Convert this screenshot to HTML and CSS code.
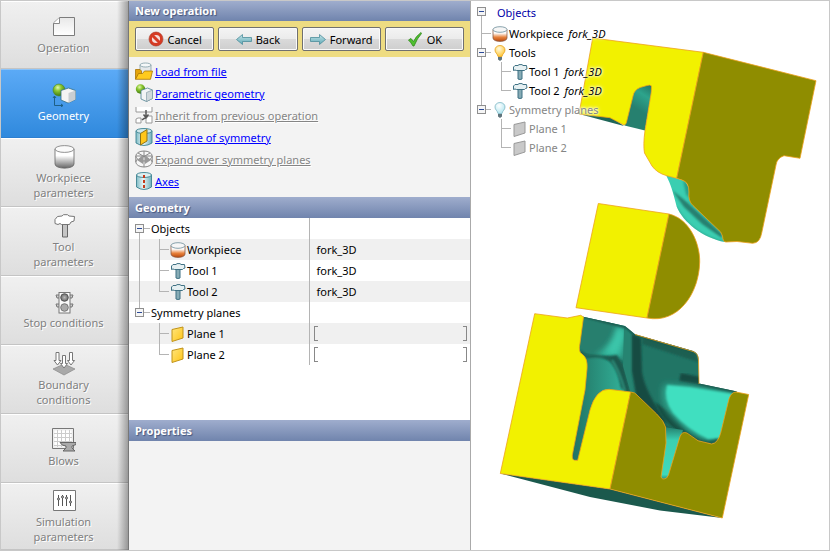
FILE: index.html
```html
<!DOCTYPE html>
<html lang="en">
<head>
<meta charset="utf-8">
<title>New operation</title>
<link rel="stylesheet" href="styles.css">
</head>
<body>
<svg class="defs" aria-hidden="true">
  <defs>
    <linearGradient id="gGray" x1="0" y1="0" x2="0" y2="1"><stop offset=".35" stop-color="#fff"/><stop offset="1" stop-color="#666"/></linearGradient>
    <linearGradient id="gPaper" x1="0" y1="0" x2="0" y2="1"><stop offset="0" stop-color="#e8e8e8"/><stop offset="1" stop-color="#fff"/></linearGradient>
    <linearGradient id="gHot" x1="0" y1="0" x2="0" y2="1"><stop offset=".3" stop-color="#fff"/><stop offset=".65" stop-color="#e8823c"/><stop offset="1" stop-color="#b8480c"/></linearGradient>
    <linearGradient id="gGlass" x1="0" y1="0" x2="1" y2="0"><stop offset="0" stop-color="#7fbcc6"/><stop offset=".45" stop-color="#e9f5f6"/><stop offset="1" stop-color="#6fb0bc"/></linearGradient>
    <linearGradient id="gPlane" x1="0" y1="0" x2="1" y2="1"><stop offset="0" stop-color="#ffe680"/><stop offset="1" stop-color="#ffc414"/></linearGradient>
    <linearGradient id="gArrow" x1="0" y1="0" x2="0" y2="1"><stop offset="0" stop-color="#c4e4e8"/><stop offset="1" stop-color="#5fa9b6"/></linearGradient>
    <radialGradient id="gBall" cx=".4" cy=".3" r=".7"><stop offset="0" stop-color="#e4f7b4"/><stop offset=".4" stop-color="#8cc832"/><stop offset="1" stop-color="#3f7a10"/></radialGradient>
    <radialGradient id="gBulb" cx=".4" cy=".3" r=".7"><stop offset="0" stop-color="#fffbe0"/><stop offset="1" stop-color="#ffc636"/></radialGradient>
    <radialGradient id="gBulbOff" cx=".4" cy=".3" r=".7"><stop offset="0" stop-color="#fff"/><stop offset="1" stop-color="#b4e6f0"/></radialGradient>
    <radialGradient id="gLamp"><stop offset="0" stop-color="#bbb"/><stop offset="1" stop-color="#666"/></radialGradient>
  </defs>
  <symbol id="i-hammer" viewBox="0 0 16 16">
    <path d="M6 5.500h4V15q-2 1-4 0z" fill="#86abb5" stroke="#3f7183"/>
    <path d="M1.500 3 3 1.500 6 1.500 7 .600h3l1 .900h3.500l.500 3.500-1.500.500-1 1H4.500L3 6 1.500 6.500z" fill="#e6f0f2" stroke="#3f7183"/>
  </symbol>
  <symbol id="i-workpiece" viewBox="0 0 16 16">
    <path d="M1 3.500V12c0 4.500 14 4.500 14 0V3.500z" fill="url(#gHot)" stroke="#8b5a44" stroke-width=".8"/>
    <ellipse cx="8" cy="3.500" rx="7" ry="2.800" fill="#f6f6f6" stroke="#6b8c98" stroke-width=".8"/>
  </symbol>
  <symbol id="i-plane" viewBox="0 0 16 16"><path d="M2 3.500 13 1v11L2 15.500z" fill="url(#gPlane)" stroke="#c09218"/></symbol>
  <symbol id="i-plane-off" viewBox="0 0 16 16"><path d="M2 3.500 13 1v11L2 15.500z" fill="#c9c9c9" stroke="#999"/></symbol>
  <symbol id="i-bulb" viewBox="0 0 12 16">
    <path d="M6 .500C2.800.500 1 2.700 1 5c0 3 2.500 3.500 3 6.500h4C8.500 8.500 11 8 11 5 11 2.700 9.200.500 6 .500z" fill="url(#gBulb)" stroke="#e8a21c" stroke-width=".8"/><path d="M4 12h4v2.500L6 16l-2-1.500z" fill="#60747c"/></symbol>
  <symbol id="i-bulb-off" viewBox="0 0 12 16">
    <path d="M6 .500C2.800.500 1 2.700 1 5c0 3 2.500 3.500 3 6.500h4C8.500 8.500 11 8 11 5 11 2.700 9.200.500 6 .500z" fill="url(#gBulbOff)" stroke="#7fb8c4" stroke-width=".8"/><path d="M4 12h4v2.500L6 16l-2-1.500z" fill="#60747c"/></symbol>
  <symbol id="i-box" viewBox="0 0 9 9"><rect x=".5" y=".5" width="8" height="8" fill="#f5f5f5" stroke="#8f8f8f"/><path d="M2 4.500h5" stroke="#2b4a98"/></symbol>
</svg>

<div class="app">
  <nav class="steps" aria-label="Steps">
    <button class="step">
      <svg viewBox="0 0 24 24"><path d="M1.500 8 7.500 2.500h15v18h-21z" fill="url(#gPaper)" stroke="#7c7c7c"/><path d="M1.500 8.500h6v-6" fill="#fff" stroke="#888"/></svg>
      <span>Operation</span></button>
    <button class="step current" aria-current="step">
      <svg viewBox="0 0 24 24"><circle cx="7" cy="7" r="6" fill="url(#gBall)" stroke="#4e8620" stroke-width=".6"/><path d="M9 7.500 16.500 5l7 2.500v9L16 20l-7-3z" fill="#f4f4f4" stroke="#327087" stroke-width=".8"/><path d="m16.500 10 7-2.500v9L16.500 20z" fill="#c9ced2"/><path d="M2.500 13v9.500H11M1 15l1.500-2L4 15M9 21l2 1.500L9 24" fill="none" stroke="#1e5f85"/></svg>
      <span>Geometry</span></button>
    <button class="step">
      <svg viewBox="0 0 24 24"><path d="M3 4v15c0 5.500 19 5.500 19 0V4z" fill="url(#gGray)" stroke="#666" stroke-width=".8"/><ellipse cx="12.500" cy="4" rx="9.500" ry="3.400" fill="#fafafa" stroke="#777" stroke-width=".8"/></svg>
      <span>Workpiece<br>parameters</span></button>
    <button class="step">
      <svg viewBox="0 0 24 24"><path d="M10.500 9h5v14h-5z" fill="#c5c5c5" stroke="#666"/><path d="M3 5.500 5.500 2.500 10 2l1.500-1.300h4L17 2l5.500.500-.500 4.500-3 1-1.500 2.500h-8L8 9.500 6 10.500 3 9.500z" fill="#fff" stroke="#777"/></svg>
      <span>Tool<br>parameters</span></button>
    <button class="step">
      <svg viewBox="0 0 24 24"><path d="M7 5H4l1 3h2m0 6H4l1 3h2M18 5h3l-1 3h-2m0 6h3l-1 3h-2" fill="#ccc" stroke="#777"/><rect x="7" y="2.500" width="11" height="20.500" fill="#fafafa" stroke="#777"/><circle cx="12.500" cy="7.500" r="3.800" fill="url(#gLamp)" stroke="#555"/><circle cx="12.500" cy="17.500" r="3.800" fill="#aaa" stroke="#777"/></svg>
      <span>Stop conditions</span></button>
    <button class="step">
      <svg viewBox="0 0 24 24"><path d="m1 17 11-5 11 5-11 6z" fill="#a9a9a9" stroke="#888" stroke-width=".7"/><path d="M4 .500h3v8h2L5.500 13 2 8.500h2zM10.500 3.500h3v8h2L12 16l-3.500-4.500h2zM17.500.500h3v8h2L19 13l-3.500-4.500h2z" fill="#fff" stroke="#777"/></svg>
      <span>Boundary<br>conditions</span></button>
    <button class="step">
      <svg viewBox="0 0 24 24"><path d="M.500.500h21v20H.500z" fill="#eee" stroke="#777"/><path d="M2.500 2.500h17v16h-17z" fill="#fff"/><path d="M5.500 2v17M9.500 2v17M13.500 2v17M17.500 2v17M2 5.500h18M2 9.500h18M2 13.500h18M2 17.500h18" stroke="#ccc"/><path d="M8 14.500h16v2l-4 1.500v2l3 3H11l3-3v-2q-4 0-6-3.500z" fill="#aaa" stroke="#666"/></svg>
      <span>Blows</span></button>
    <button class="step">
      <svg viewBox="0 0 24 24"><path d="M1.500 1.500h22v20h-22z" fill="#fff" stroke="#777"/><path d="M6.500 6v11M10.500 6v11M14.500 6v11M18.500 6v11" stroke="#555"/><g fill="#fff" stroke="#444"><circle cx="6.500" cy="10" r="1"/><circle cx="10.500" cy="8" r="1"/><circle cx="14.500" cy="9" r="1"/><circle cx="18.500" cy="13" r="1"/></g></svg>
      <span>Simulation<br>parameters</span></button>
  </nav>

  <main class="panel">
    <h2 class="bar">New operation</h2>
    <div class="actions">
      <button class="btn"><svg viewBox="0 0 16 16"><circle cx="8" cy="8" r="5.500" fill="#f4dedb" stroke="#d63b24" stroke-width="2.800"/><path d="m4 4 8 8" stroke="#d63b24" stroke-width="3"/><circle cx="8" cy="8" r="7" fill="none" stroke="#a5311f" stroke-width=".6"/></svg>Cancel</button>
      <button class="btn"><svg viewBox="0 0 16 16"><path d="m.500 8.500 6-5v3h9v4h-9v3z" fill="url(#gArrow)" stroke="#4b8d9b" stroke-width=".8"/></svg>Back</button>
      <button class="btn"><svg viewBox="0 0 16 16"><path d="m15.500 8.500-6-5v3h-9v4h9v3z" fill="url(#gArrow)" stroke="#4b8d9b" stroke-width=".8"/></svg>Forward</button>
      <button class="btn"><svg viewBox="0 0 16 16"><path d="m1.500 9 2.500-1.500 2.500 3Q9 5 14 1.500l.500 1Q10 7.500 7 15H6Q4 11.500 1.500 9z" fill="#4fc130" stroke="#31871b" stroke-width=".8"/></svg>OK</button>
    </div>
    <ul class="links">
      <li><svg viewBox="0 0 18 18"><path d="M5 3v9h11V3z" fill="#e4e8ea" stroke="#7d979f" stroke-width=".7"/><ellipse cx="10.500" cy="3" rx="5.500" ry="2" fill="#f5f8f9" stroke="#6f8f99" stroke-width=".7"/><path d="M.500 17V7.500H5L6.500 9v3z" fill="#e5a40c" stroke="#a87508" stroke-width=".8"/><path d="M.500 17.300 3.500 11.500h4L9.500 9h8l-2 8.300z" fill="#ffca1e" stroke="#a87508" stroke-width=".8"/></svg><a href="#load">Load from file</a></li>
      <li><svg viewBox="0 0 18 18"><circle cx="5.500" cy="5" r="4.700" fill="url(#gBall)"/><path d="M6 6.500 12.500 4l5 2v8.500L11.500 17.500 6 15z" fill="#f2f5f6" stroke="#4d8291" stroke-width=".8"/><path d="m11.500 8.500 6-2.500v8.500l-6 3z" fill="#cfd8db" stroke="#7896a0" stroke-width=".6"/></svg><a href="#parametric">Parametric geometry</a></li>
      <li class="off"><svg viewBox="0 0 18 18"><path d="M1 1v5h16V1M1 17v-4l2-1h3v5zM17 17v-7h-4l-2 3v4z" fill="#fff" stroke="#999"/><path d="M11 4v7M8.500 8.500 11 11.500l2.500-3M7 14q2-2 4-2" fill="none" stroke="#555" stroke-width="1.500"/></svg><a href="#inherit">Inherit from previous operation</a></li>
      <li><svg viewBox="0 0 18 18"><path d="M1 3v12q8 5 16 0V3z" fill="url(#gGlass)" stroke="#3c8291" stroke-width=".9"/><ellipse cx="9" cy="3" rx="8" ry="2.500" fill="#cfe7eb" stroke="#3c8291" stroke-width=".9"/><path d="m5.500 5.500 6.500-4V13l-6.500 4z" fill="#ffc61a" stroke="#8d7318"/></svg><a href="#set-plane">Set plane of symmetry</a></li>
      <li class="off"><svg viewBox="0 0 18 18"><g fill="#f7f7f7" stroke="#888"><ellipse cx="9" cy="12" rx="8.200" ry="5"/><path d="M.800 6v6M17.200 6v6"/><ellipse cx="9" cy="6" rx="8.200" ry="5"/><path d="M9 1v16M1 6l16 0M3 3l12 7M15 3 3 10" fill="none"/></g><path d="m2 10 6-5v9zM16 10l-6-5v9z" fill="#999"/></svg><a href="#expand">Expand over symmetry planes</a></li>
      <li><svg viewBox="0 0 18 18"><path d="M1.500 3v12q7.500 5 15 0V3z" fill="url(#gGlass)" stroke="#3c8291" stroke-width=".9"/><ellipse cx="9" cy="3" rx="7.500" ry="2.500" fill="#dceef0" stroke="#3c8291" stroke-width=".9"/><path d="M9 3v13" stroke="#c43b1c" stroke-width="2" stroke-dasharray="3 2"/></svg><a href="#axes">Axes</a></li>
    </ul>
    <h2 class="bar">Geometry</h2>
    <div class="sheet">
      <table>
        <colgroup><col class="names"><col></colgroup>
        <tbody>
        <tr><th><div class="cell"><svg class="twig" viewBox="0 0 20 21"><path d="M4.500 10v11M9 10.500h6" class="ln"/><use href="#i-box" x="0" y="6" width="9" height="9"/></svg>Objects</div></th><td></td></tr>
        <tr><th><div class="cell"><svg class="twig deep" viewBox="0 0 35 21"><path d="M4.500 0v21M24.500 0v21M24 10.500h10" class="ln"/></svg><svg class="ico"><use href="#i-workpiece"/></svg>Workpiece</div></th><td>fork_3D</td></tr>
        <tr><th><div class="cell"><svg class="twig deep" viewBox="0 0 35 21"><path d="M4.500 0v21M24.500 0v21M24 10.500h10" class="ln"/></svg><svg class="ico"><use href="#i-hammer"/></svg>Tool 1</div></th><td>fork_3D</td></tr>
        <tr><th><div class="cell"><svg class="twig deep" viewBox="0 0 35 21"><path d="M4.500 0v21M24.500 0v11M24 10.500h10" class="ln"/></svg><svg class="ico"><use href="#i-hammer"/></svg>Tool 2</div></th><td>fork_3D</td></tr>
        <tr><th><div class="cell"><svg class="twig" viewBox="0 0 20 21"><path d="M4.500 0v10M9 10.500h6" class="ln"/><use href="#i-box" x="0" y="6" width="9" height="9"/></svg>Symmetry planes</div></th><td></td></tr>
        <tr><th><div class="cell"><svg class="twig deep" viewBox="0 0 35 21"><path d="M24.500 0v21M24 10.500h10" class="ln"/></svg><svg class="ico"><use href="#i-plane"/></svg>Plane 1</div></th><td class="range"><div></div></td></tr>
        <tr><th><div class="cell"><svg class="twig deep" viewBox="0 0 35 21"><path d="M24.500 0v11M24 10.500h10" class="ln"/></svg><svg class="ico"><use href="#i-plane"/></svg>Plane 2</div></th><td class="range"><div></div></td></tr>
        </tbody>
      </table>
    </div>
    <h2 class="bar">Properties</h2>
    <div class="props"></div>
  </main>

  <section class="view" aria-label="3D view">
    <svg class="scene" viewBox="471 1 358 549" preserveAspectRatio="xMinYMin meet">
      <defs>
        <filter id="b1" x="-30%" y="-30%" width="160%" height="160%"><feGaussianBlur stdDeviation="1"/></filter>
        <filter id="b3" x="-50%" y="-50%" width="200%" height="200%"><feGaussianBlur stdDeviation="3"/></filter>
        <linearGradient id="slotA" gradientUnits="userSpaceOnUse" x1="626" y1="125" x2="652" y2="84"><stop offset=".4" stop-color="#26806f"/><stop offset=".72" stop-color="#2da48c"/><stop offset="1" stop-color="#226f60"/></linearGradient>
        <linearGradient id="slotB" x1="0" y1="0" x2="1" y2="0"><stop offset="0" stop-color="#216f60"/><stop offset="1" stop-color="#32b299"/></linearGradient>
        <linearGradient id="slotC" x1="0" y1="0" x2="0" y2="1"><stop offset="0" stop-color="#257f6d"/><stop offset=".25" stop-color="#3bd0b2"/><stop offset=".9" stop-color="#3fd9bb"/><stop offset="1" stop-color="#267f6d"/></linearGradient>
        <clipPath id="cavity"><path d="M583 316.700 625 326q5 4 10 8.300L693 351q5 2 5.500 7L699 383.500 737 391.500 731 395 721 433q-3 11-9 11-14-1-28-11L682 445 640 410 608 400 594 412 579 461 572 460V455L586 365 584 357 578 351z"/></clipPath>
        <clipPath id="skirt"><path d="M666 175C671 185 673 192 676.700 206.700 683 222 703 238 725 242L722 232 693 205 689 188 685 181z"/></clipPath>
      </defs>

      <path d="M624.500 125.500 645 130.500 653 84 632 84z" fill="url(#slotA)"/>
      <path d="M579 114 610 116 624 126z" fill="#1f6658"/>
      <g clip-path="url(#skirt)">
        <path d="M660 170h70v75h-70z" fill="#3bceb1"/>
        <path d="M672 190 688 203 722 234 722 238 702 224 684 207z" fill="#26806f" filter="url(#b1)"/>
        <path d="M683 180 689 185 689 200 695 207 686 194z" fill="#2a9d87" filter="url(#b1)"/>
        <path d="M676 207C686 225 703 238 725 242" fill="none" stroke="#26806f" stroke-width="1" filter="url(#b1)"/>
      </g>
      <g stroke="#eda11c" stroke-width=".8" stroke-linejoin="round">
        <path class="lit" d="M592.700 38 703.300 52.300 676.700 178.300 666.700 175.700Q657 173 652 166L644.500 153Q643 145 645 130.500L651.300 92 651.500 86Q650 84.500 647 85.500L640 87.500Q634 90 633 96L627 120Q626 127 622 124L610 117.700 579 114z"/>
        <path class="shade" d="M703.300 52.300 816 80.700 800 158.300 784 155.700Q777 158 776 165L761.700 233Q760 243 752.700 243.300L737 241.500 726 242Q723 242 722.500 236L720.700 232 693 205.500Q688 201 689 192 689 182 682 180L676.700 178.300z"/>
        <path class="lit" d="M598.300 203.500 669 214 647 318 576 307.700z"/>
        <path class="shade" d="M669 214C690 219 700 244 699.700 262 699 294 678 324 647 318z"/>
      </g>

      <path d="M500.300 473.500 610 489 722.300 518 660 510.500 590 497z" fill="#1b594d"/>
      <g clip-path="url(#cavity)">
        <path d="M560 310h190v160H560z" fill="#217565"/>
        <path d="M580 314 624 326 623 360 580 352z" fill="#277f6e"/>
        <path d="M618 325Q615 343 594 357L622 358 626 330z" fill="#34b89d" filter="url(#b3)"/>
        <path d="M617 328Q615 342 606 352L615 354 623 338 623 329z" fill="#3cc9ad" filter="url(#b3)"/>
        <path d="M583 358 606 356Q620 360 625 396L594 420 580 463 570 463z" fill="url(#slotB)"/>
        <path d="M601 357Q616 360 621 388L630 394 623 365 617 355z" fill="#1b594d" filter="url(#b1)"/>
        <path d="M612 360Q619 370 625 391" fill="none" stroke="#2d9681" stroke-width="2" filter="url(#b1)"/>
        <path d="M624 328 623 366 631 394 640 398 632 370 632 335z" fill="#268471"/>
        <path d="M632 334 641 338 642 372Q645 392 668 424L655 418 636 396 632 372z" fill="#184c42" filter="url(#b1)"/>
        <path d="M643 336 696 352 698 362 642 344z" fill="#1d5e51" filter="url(#b1)"/>
        <path d="M580 315 625 327 636 334 695 351" fill="none" stroke="#184c42" stroke-width="2" filter="url(#b1)"/>
        <path d="M580 351 587 357Q601 355 610 359" fill="none" stroke="#1d6254" stroke-width="2.500" filter="url(#b1)"/>
        <path d="M680 377 700 381 738 390" fill="none" stroke="#184c42" stroke-width="8" filter="url(#b1)"/>
        <path d="M655 402Q660 416 670 425 680 434 692 437L672 414z" fill="#174b41" filter="url(#b1)"/>
        <path d="M664 384Q659 397 668 412 682 430 704 440L722 440 736 394 690 386z" fill="#2fa58d" filter="url(#b3)"/>
        <path d="M667 385Q663 399 673 413 688 430 708 439L722 438 734 394 690 387z" fill="#40dfc0" filter="url(#b1)"/>
        <path d="M662 424 676 432 687 434 700 441Q711 445 718 440" fill="none" stroke="#1d5e51" stroke-width="3" filter="url(#b1)"/>
      </g>
      <path d="M664 427 683 430 668 480 660 479z" fill="url(#slotC)"/>
      <g stroke="#eda11c" stroke-width=".8" stroke-linejoin="round">
        <path class="lit" d="M534.700 313.700 567.300 318 580.700 315.300 583.500 317 580 343Q578 352 582 354 588 358 587 369L585 390 572.300 455Q572 460 574.700 460.300L577.700 460.300 590 410Q596 389 609 389.300L630.700 392 610 489 500.300 473.500z"/>
        <path class="shade" d="M630.700 392 Q635 392 638 396L656.700 414Q664 421 665.500 427L666 443 661 477Q662 479.500 664 479 667 479 668.500 475L680 436.700Q682 431 687 433L698 440.700 711.700 444Q718 443 720.700 433L728 403Q730 392 736 392L748.700 394.500 722.300 518 610 489z"/>
        <path d="M635 334.500 693 351.500Q698 353 698.500 360L699 384" fill="none"/>
      </g>
    </svg>
    <ul class="tree">
      <li class="top"><svg class="twig" viewBox="0 0 20 23"><path d="M4.500 14v9" class="ln"/><use href="#i-box" x="0" y="6" width="9" height="9"/></svg><span class="root">Objects</span></li>
      <li><svg class="stem" viewBox="0 0 15 19"><path d="M4.500 0v19M4 9.500h10" class="ln"/></svg><svg class="ico"><use href="#i-workpiece"/></svg><span>Workpiece <i>fork_3D</i></span></li>
      <li><svg class="stem" viewBox="0 0 15 19"><path d="M4.500 0v19M9 9.500h5" class="ln"/><use href="#i-box" x="0" y="5" width="9" height="9"/></svg><svg class="ico"><use href="#i-bulb"/></svg><span>Tools</span></li>
      <li><svg class="twig deep" viewBox="0 0 35 19"><path d="M4.500 0v19M24.500 0v19M24 9.500h10" class="ln"/></svg><svg class="ico"><use href="#i-hammer"/></svg><span>Tool 1 <i>fork_3D</i></span></li>
      <li><svg class="twig deep" viewBox="0 0 35 19"><path d="M4.500 0v19M24.500 0v10M24 9.500h10" class="ln"/></svg><svg class="ico"><use href="#i-hammer"/></svg><span>Tool 2 <i>fork_3D</i></span></li>
      <li class="off"><svg class="stem" viewBox="0 0 15 19"><path d="M4.500 0v10M9 9.500h5" class="ln"/><use href="#i-box" x="0" y="5" width="9" height="9"/></svg><svg class="ico"><use href="#i-bulb-off"/></svg><span>Symmetry planes</span></li>
      <li class="off"><svg class="twig deep" viewBox="0 0 35 19"><path d="M24.500 0v19M24 9.500h10" class="ln"/></svg><svg class="ico"><use href="#i-plane-off"/></svg><span>Plane 1</span></li>
      <li class="off"><svg class="twig deep" viewBox="0 0 35 19"><path d="M24.500 0v10M24 9.500h10" class="ln"/></svg><svg class="ico"><use href="#i-plane-off"/></svg><span>Plane 2</span></li>
    </ul>
  </section>
</div>
</body>
</html>
```
FILE: styles.css
```css
* { box-sizing: border-box; }
body {
  margin: 0;
  font: 11px/15px "Noto Sans", "Open Sans", sans-serif;
  color: #000;
  background: #fff;
}
svg { display: block; flex: none; }
ul { list-style: none; margin: 0; padding: 0; }
button { font: inherit; }
.defs { position: absolute; width: 0; height: 0; }

.app {
  display: grid;
  grid-template-columns: 128px 342px 1fr;
  min-height: 100vh;
  border: 1px solid #c8c8c8;
}

/* step list */
.steps {
  position: relative;
  display: grid;
  grid-template-rows: 68px repeat(6, 69px) 1fr;
  border-right: 1px solid #777;
}
.steps::after {
  content: "";
  position: absolute;
  inset: 0 0 0 auto;
  width: 11px;
  background: linear-gradient(to right, rgba(0, 0, 0, 0), rgba(0, 0, 0, .32));
  pointer-events: none;
}
.step {
  display: flex;
  flex-direction: column;
  align-items: center;
  justify-content: center;
  gap: 1px;
  padding: 0 2px 1px 0;
  border: 0;
  border-top: 1px solid #fff;
  border-bottom: 1px solid #c4c4c4;
  background: linear-gradient(#f0f0f0, #dedede);
  color: #808080;
  text-align: center;
  text-shadow: 1px 1px 0 #fff;
}
.step svg { width: 24px; height: 24px; }
.step.current {
  border-top-color: #8cc4fa;
  border-bottom-color: #2d7fd0;
  background: linear-gradient(#5baaf6, #3089dd);
  color: #fff;
  text-shadow: none;
}

/* operation panel */
.panel {
  display: flex;
  flex-direction: column;
  border-right: 1px solid #aaa;
  background: #f3f3f3;
}
.bar {
  margin: 0;
  padding: 3px 6px;
  font-size: 11px;
  line-height: 15px;
  font-weight: bold;
  color: #fff;
  text-shadow: 1px 1px 1px #44567e;
  background: linear-gradient(#9fadcd, #7084ad);
}
.bar:first-child { padding-top: 2px; }
.actions {
  display: grid;
  grid-template-columns: repeat(4, 1fr);
  gap: 4px;
  padding: 6px;
  background: #eedc82;
}
.btn {
  display: flex;
  align-items: center;
  justify-content: center;
  gap: 4px;
  height: 24px;
  padding: 0;
  border: 1px solid #707070;
  border-radius: 2px;
  background: linear-gradient(#f4f4f4, #ebebeb 50%, #dadada 50%, #cecece);
  box-shadow: inset 0 0 0 1px #fafafa;
}
.btn svg { width: 16px; height: 16px; }

.links { padding: 3px 6px 5px; }
.links li { display: flex; align-items: center; gap: 2px; height: 22px; }
.links svg { width: 18px; height: 18px; }
.links a { color: #00f; }
.links .off a { color: #858585; text-shadow: 1px 1px 0 #fff; }

.sheet { flex: 1; background: #fff; }
.sheet table { width: 100%; border-collapse: collapse; table-layout: fixed; }
.names { width: 180px; }
.sheet tr { height: 21px; }
.sheet tr:nth-child(even) { background: #f0f0f0; }
.sheet th { padding: 0 0 0 6px; font-weight: normal; text-align: left; border-right: 1px solid #b4b4b4; }
.sheet td { padding: 0 7px; }
.cell { display: flex; align-items: center; height: 21px; }
.ln { fill: none; stroke: #b4b4b4; }
.sheet .twig { width: 16px; height: 21px; overflow: visible; }
.sheet .twig:not(.deep) { width: 20px; margin-right: -4px; }
.sheet .deep { width: 35px; }
.ico { width: 16px; height: 16px; margin-right: 1px; }
.sheet .range { padding: 0 3px 0 4px; }
.range div {
  height: 15px;
  border: 1px solid #888;
  border-width: 0 1px;
  background:
    linear-gradient(#888, #888) 0 0 / 3px 1px,
    linear-gradient(#888, #888) 0 100% / 3px 1px,
    linear-gradient(#888, #888) 100% 0 / 3px 1px,
    linear-gradient(#888, #888) 100% 100% / 3px 1px;
  background-repeat: no-repeat;
}
.props { flex: 0 0 109px; }

/* 3D view */
.view { position: relative; background: #fff; }
.scene { position: absolute; inset: 0; width: 100%; height: 100%; }
.lit { fill: #f2f100; }
.shade { fill: #8f8d00; }
.tree { position: relative; padding: 0 6px; }
.tree li { display: flex; align-items: center; height: 19px; white-space: nowrap; }
.tree .top { height: 23px; }
.tree .twig { width: 20px; height: 23px; }
.tree .deep { width: 35px; height: 19px; }
.tree .stem { width: 15px; height: 19px; }
.tree i { margin-left: 2px; }
.tree span { text-shadow: 0 0 2px #fff, 0 0 3px #fff, 0 0 4px #fff; }
.tree .off { color: #858585; }
.tree .root { color: #0000a8; }
```
